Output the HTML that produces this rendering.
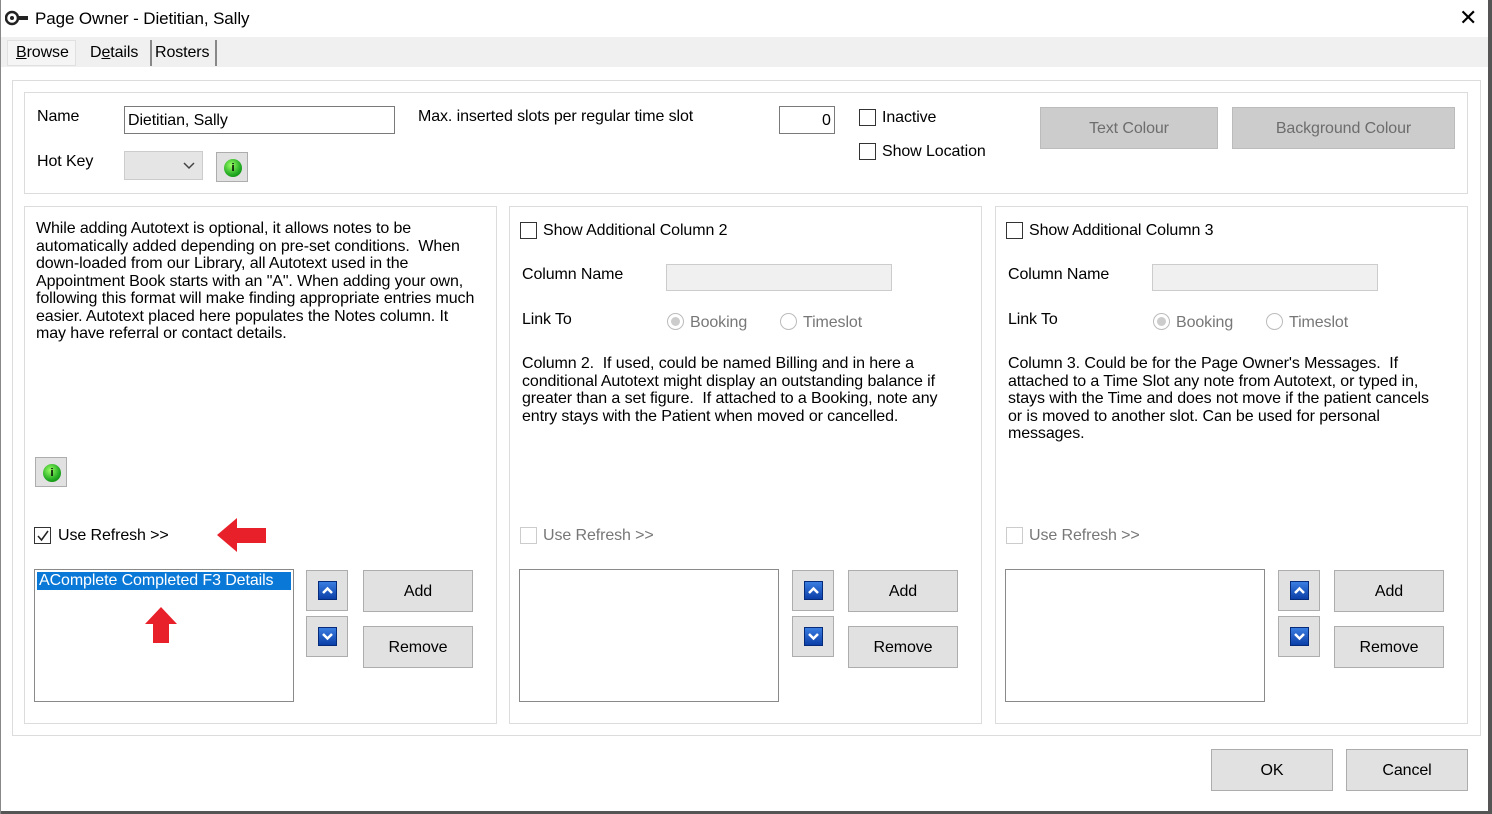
<!DOCTYPE html>
<html><head><meta charset="utf-8"><style>
*{box-sizing:border-box;margin:0;padding:0}
body{width:1492px;height:814px;background:#fff;font-family:"Liberation Sans",sans-serif;font-size:16px;letter-spacing:-0.1px;color:#000;position:relative;overflow:hidden}
.a{position:absolute;white-space:nowrap;margin-top:1px}
.box{position:absolute;border:1px solid #dcdcdc}
.btn{position:absolute;background:#e1e1e1;border:1px solid #adadad;display:flex;align-items:center;justify-content:center}
.cb{position:absolute;width:17px;height:17px;border:1.5px solid #333;background:#fff}
.cbd{border-color:#ccc}
.rad{position:absolute;width:17px;height:17px;border:1px solid #bbb;border-radius:50%;background:#fff}
.inp{position:absolute;border:1px solid #7a7a7a;background:#fff}
.lst{position:absolute;border:1px solid #8a8a8a;background:#fff}
.ar{position:absolute;width:19px;height:19px;background:linear-gradient(#3a7de0,#0b3fa8);border:1px solid #062a7a}
.p{position:absolute;line-height:17.5px;white-space:pre;margin-top:1px}
.gray{color:#777}
.info{position:absolute;width:32px;height:30px;background:#e1e1e1;border:1px solid #adadad}
.info i{position:absolute;left:7px;top:6px;width:18px;height:18px;border-radius:50%;background:radial-gradient(circle at 40% 35%,#9f6,#2a2 60%,#070);font-style:normal;font-size:11px;font-weight:bold;color:#000;text-align:center;line-height:18px}
</style></head><body>
<div style="position:absolute;right:0;top:0;width:4px;height:814px;background:#555"></div>
<div style="position:absolute;left:0;bottom:0;width:1492px;height:3px;background:#555"></div>
<div style="position:absolute;left:0;top:0;width:1px;height:814px;background:#888"></div>
<svg style="position:absolute;left:5px;top:10px" width="24" height="16" viewBox="0 0 24 16"><circle cx="7" cy="8" r="6" fill="none" stroke="#222" stroke-width="2.5"/><circle cx="7" cy="8" r="2" fill="#222"/><rect x="12" y="6" width="11" height="4" fill="#222"/></svg>
<div class="a" style="left:35px;top:8px;font-size:17px">Page Owner - Dietitian, Sally</div>
<div class="a" style="left:1459px;top:4px;font-size:22px">✕</div>
<div style="position:absolute;left:1px;top:37px;width:1487px;height:30px;background:#f0f0f0"></div>
<div style="position:absolute;left:7px;top:40px;width:69px;height:26px;border:1px solid #e0e0e0;background:#f5f5f5"></div>
<div class="a" style="left:16px;top:43px;font-size:16px"><u>B</u>rowse</div>
<div class="a" style="left:90px;top:43px;font-size:16px">D<u>e</u>tails</div>
<div style="position:absolute;left:150px;top:40px;width:2px;height:26px;background:#888"></div>
<div class="a" style="left:155px;top:43px;font-size:16px">Rosters</div>
<div style="position:absolute;left:215px;top:40px;width:2px;height:26px;background:#888"></div>
<div class="box" style="left:12px;top:80px;width:1469px;height:656px"></div>
<div class="box" style="left:24px;top:92px;width:1444px;height:102px"></div>
<div class="a" style="left:37px;top:107px">Name</div>
<div class="inp" style="left:124px;top:106px;width:271px;height:28px"></div>
<div class="a" style="left:128px;top:111px">Dietitian, Sally</div>
<div class="a" style="left:37px;top:152px">Hot Key</div>
<div style="position:absolute;left:124px;top:151px;width:79px;height:29px;background:#e5e5e5;border:1px solid #ccc"></div>
<svg style="position:absolute;left:183px;top:162px" width="12" height="8"><path d="M1 1l5 5 5-5" fill="none" stroke="#444" stroke-width="1.5"/></svg>
<div class="info" style="left:216px;top:152px"><i>i</i></div>
<div class="a" style="left:418px;top:107px">Max. inserted slots per regular time slot</div>
<div class="inp" style="left:779px;top:106px;width:56px;height:28px"></div>
<div class="a" style="left:822px;top:111px">0</div>
<div class="cb" style="left:859px;top:109px"></div><div class="a" style="left:882px;top:108px">Inactive</div>
<div class="cb" style="left:859px;top:143px"></div><div class="a" style="left:882px;top:142px">Show Location</div>
<div class="btn" style="left:1040px;top:107px;width:178px;height:42px;background:#ccc;border-color:#bbb;color:#6d6d6d;padding-top:1px">Text Colour</div>
<div class="btn" style="left:1232px;top:107px;width:223px;height:42px;background:#ccc;border-color:#bbb;color:#6d6d6d;padding-top:1px">Background Colour</div>

<!-- left -->
<div class="box" style="left:24px;top:206px;width:473px;height:518px"></div>
<div class="p" style="left:36px;top:219px">While adding Autotext is optional, it allows notes to be
automatically added depending on pre-set conditions.  When
down-loaded from our Library, all Autotext used in the
Appointment Book starts with an "A". When adding your own,
following this format will make finding appropriate entries much
easier. Autotext placed here populates the Notes column. It
may have referral or contact details.</div>
<div class="info" style="left:35px;top:457px"><i>i</i></div>
<div class="cb" style="left:34px;top:527px"></div>
<svg style="position:absolute;left:36px;top:529px" width="14" height="14"><path d="M2 7l3.5 4L12 2" fill="none" stroke="#222" stroke-width="1.5"/></svg>
<div class="a" style="left:58px;top:526px">Use Refresh &gt;&gt;</div>
<svg style="position:absolute;left:217px;top:518px" width="50" height="34"><path d="M0 17L20 0V10H49V25H20V34Z" fill="#e8202a"/></svg>
<div class="lst" style="left:34px;top:569px;width:260px;height:133px"></div>
<div class="a" style="left:37px;top:571px;width:254px;height:18px;background:#0a78d7;color:#fff;padding-left:2px;line-height:18px">AComplete Completed F3 Details</div>
<svg style="position:absolute;left:145px;top:607px" width="32" height="36"><path d="M16 0L32 17H24V36H8V17H0Z" fill="#e8202a"/></svg>

<!-- mid -->
<div class="box" style="left:509px;top:206px;width:473px;height:518px"></div>
<div class="cb" style="left:520px;top:222px"></div><div class="a" style="left:543px;top:221px">Show Additional Column 2</div>
<div class="a" style="left:522px;top:265px">Column Name</div>
<div style="position:absolute;left:666px;top:264px;width:226px;height:27px;background:#f0f0f0;border:1px solid #ccc"></div>
<div class="a" style="left:522px;top:310px">Link To</div>
<div class="rad" style="left:667px;top:313px"><div style="margin:3px;width:9px;height:9px;border-radius:50%;background:#ccc"></div></div><div class="a gray" style="left:690px;top:313px">Booking</div>
<div class="rad" style="left:780px;top:313px"></div><div class="a gray" style="left:803px;top:313px">Timeslot</div>
<div class="p" style="left:522px;top:354px">Column 2.  If used, could be named Billing and in here a
conditional Autotext might display an outstanding balance if
greater than a set figure.  If attached to a Booking, note any
entry stays with the Patient when moved or cancelled.</div>
<div class="cb cbd" style="left:520px;top:527px"></div><div class="a gray" style="left:543px;top:526px">Use Refresh &gt;&gt;</div>
<div class="lst" style="left:519px;top:569px;width:260px;height:133px"></div>

<!-- right -->
<div class="box" style="left:995px;top:206px;width:473px;height:518px"></div>
<div class="cb" style="left:1006px;top:222px"></div><div class="a" style="left:1029px;top:221px">Show Additional Column 3</div>
<div class="a" style="left:1008px;top:265px">Column Name</div>
<div style="position:absolute;left:1152px;top:264px;width:226px;height:27px;background:#f0f0f0;border:1px solid #ccc"></div>
<div class="a" style="left:1008px;top:310px">Link To</div>
<div class="rad" style="left:1153px;top:313px"><div style="margin:3px;width:9px;height:9px;border-radius:50%;background:#ccc"></div></div><div class="a gray" style="left:1176px;top:313px">Booking</div>
<div class="rad" style="left:1266px;top:313px"></div><div class="a gray" style="left:1289px;top:313px">Timeslot</div>
<div class="p" style="left:1008px;top:354px">Column 3. Could be for the Page Owner's Messages.  If
attached to a Time Slot any note from Autotext, or typed in,
stays with the Time and does not move if the patient cancels
or is moved to another slot. Can be used for personal
messages.</div>
<div class="cb cbd" style="left:1006px;top:527px"></div><div class="a gray" style="left:1029px;top:526px">Use Refresh &gt;&gt;</div>
<div class="lst" style="left:1005px;top:569px;width:260px;height:133px"></div>

<div class="btn" style="left:306px;top:570px;width:42px;height:41px"><div class="ar" style="position:static"><svg width="17" height="17"><path d="M4 11l4.5-4.5L13 11" fill="none" stroke="#fff" stroke-width="2.5"/></svg></div></div>
<div class="btn" style="left:306px;top:616px;width:42px;height:41px"><div class="ar" style="position:static"><svg width="17" height="17"><path d="M4 6l4.5 4.5L13 6" fill="none" stroke="#fff" stroke-width="2.5"/></svg></div></div>
<div class="btn" style="left:363px;top:570px;width:110px;height:42px;padding-top:2px">Add</div>
<div class="btn" style="left:363px;top:626px;width:110px;height:42px;padding-top:2px">Remove</div>

<div class="btn" style="left:792px;top:570px;width:42px;height:41px"><div class="ar" style="position:static"><svg width="17" height="17"><path d="M4 11l4.5-4.5L13 11" fill="none" stroke="#fff" stroke-width="2.5"/></svg></div></div>
<div class="btn" style="left:792px;top:616px;width:42px;height:41px"><div class="ar" style="position:static"><svg width="17" height="17"><path d="M4 6l4.5 4.5L13 6" fill="none" stroke="#fff" stroke-width="2.5"/></svg></div></div>
<div class="btn" style="left:848px;top:570px;width:110px;height:42px;padding-top:2px">Add</div>
<div class="btn" style="left:848px;top:626px;width:110px;height:42px;padding-top:2px">Remove</div>

<div class="btn" style="left:1278px;top:570px;width:42px;height:41px"><div class="ar" style="position:static"><svg width="17" height="17"><path d="M4 11l4.5-4.5L13 11" fill="none" stroke="#fff" stroke-width="2.5"/></svg></div></div>
<div class="btn" style="left:1278px;top:616px;width:42px;height:41px"><div class="ar" style="position:static"><svg width="17" height="17"><path d="M4 6l4.5 4.5L13 6" fill="none" stroke="#fff" stroke-width="2.5"/></svg></div></div>
<div class="btn" style="left:1334px;top:570px;width:110px;height:42px;padding-top:2px">Add</div>
<div class="btn" style="left:1334px;top:626px;width:110px;height:42px;padding-top:2px">Remove</div>

<div class="btn" style="left:1211px;top:749px;width:122px;height:42px;padding-top:2px">OK</div>
<div class="btn" style="left:1346px;top:749px;width:122px;height:42px;padding-top:2px">Cancel</div>
</body></html>
